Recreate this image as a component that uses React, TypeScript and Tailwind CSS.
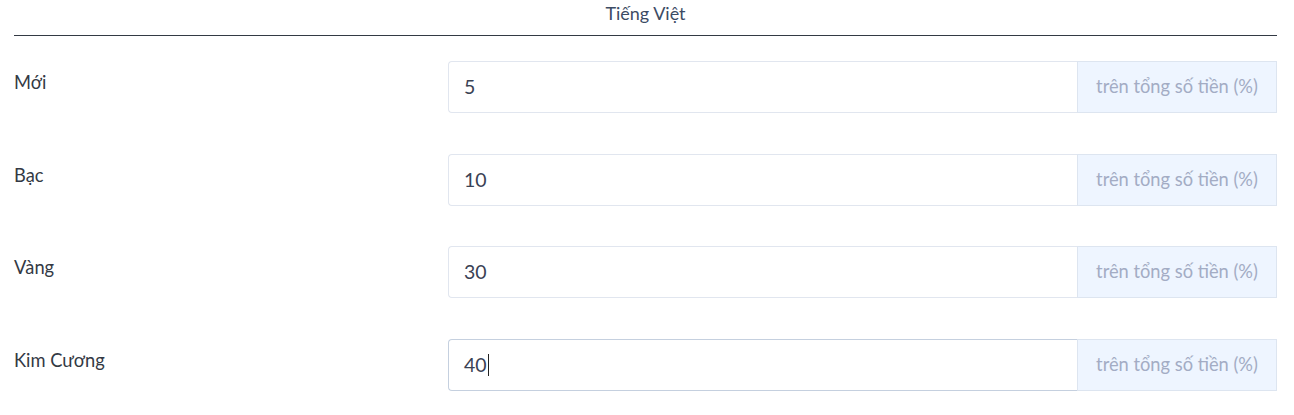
import React from "react";

const rows = [
  { label: "Mới", value: "5" },
  { label: "Bạc", value: "10" },
  { label: "Vàng", value: "30" },
  { label: "Kim Cương", value: "40", focused: true },
];

export default function App() {
  return (
    <div className="min-h-[415px] bg-white pl-[14px] pr-[17px] font-['Lato',sans-serif] text-[#3c4b64]">
      <div className="flex h-[36px] justify-center border-b border-[#333a44] pt-[1px] text-[18px] leading-[24px] text-[#3c4b64]">
        Tiếng Việt
      </div>

      <div className="flex flex-col gap-[40.5px] pt-[25px]">
        {rows.map((r) => (
          <div key={r.label} className="flex items-start">
            <label className="w-[434px] pt-[9px] text-[18.3px] leading-6 text-[#333944]">
              {r.label}
            </label>
            <div className="flex h-[52px] flex-1">
              <div
                className={
                  "relative flex flex-1 items-center rounded-l-[4px] border border-r-0 bg-white px-[15px] " +
                  (r.focused ? "border-[#c5d0df]" : "border-[#e1e6ef]")
                }
              >
                <span className="text-[19.5px] text-[#3a4254]">{r.value}</span>
                {r.focused && <span className="ml-[1px] h-[22px] w-px bg-[#222]" />}
              </div>
              <div className="flex w-[200px] items-center justify-center border border-[#dde5f0] bg-[#eef5ff] text-[18.3px] text-[#a3acc4]">
                trên tổng số tiền (%)
              </div>
            </div>
          </div>
        ))}
      </div>
    </div>
  );
}
